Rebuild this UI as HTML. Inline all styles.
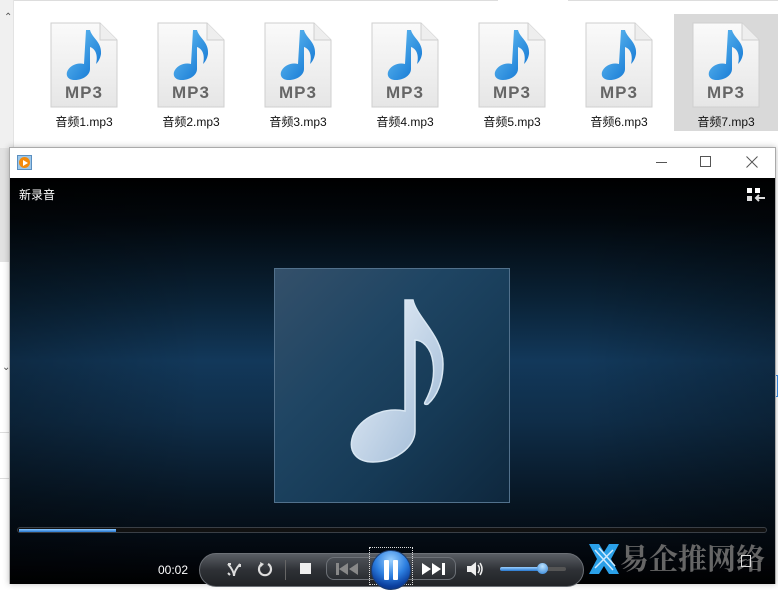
<!DOCTYPE html>
<html><head><meta charset="utf-8"><style>
*{margin:0;padding:0;box-sizing:border-box}
body{width:778px;height:584px;overflow:hidden;background:#fff;position:relative;font-family:"Liberation Sans","Noto Sans CJK SC",sans-serif}
.a{position:absolute}
.item{position:absolute;top:14px;width:104px;height:117px}
.item .lbl{position:absolute;top:99px;left:0;width:100%;text-align:center;font-size:12px;color:#111}
.file{position:absolute;left:18px;top:8px}
</style></head><body>
<div class="a" style="left:0;top:0;width:14px;height:262px;background:#f0f0f0;border-right:1px solid #e3e3e3"></div>
<div class="a" style="left:4px;top:12px;font-size:10px;color:#555">&#8963;</div>
<div class="a" style="left:14px;top:0;width:484px;height:1px;background:#ddd"></div>
<div class="a" style="left:568px;top:0;width:210px;height:1px;background:#ddd"></div>
<div class="item" style="left:674px;background:#d9d9d9"></div>

<svg width="0" height="0" style="position:absolute"><defs>
<linearGradient id="pg" x1="0" y1="0" x2="0" y2="1"><stop offset="0" stop-color="#fafafa"/><stop offset="1" stop-color="#e6e6e6"/></linearGradient>
<linearGradient id="ng" x1="0" y1="0" x2="1" y2="1"><stop offset="0" stop-color="#6cc4f5"/><stop offset="1" stop-color="#0a6fd0"/></linearGradient>
<symbol id="f" viewBox="0 0 68 86">
<path d="M1 1H50L67 18V85H1Z" fill="url(#pg)" stroke="#cfcfcf"/>
<path d="M50 1V18H67" fill="#eee" stroke="#cfcfcf"/>
<path d="M36 8h4c2 8 12 12 11 24c-1 6-4 9-5 10c2-8 0-15-6-17v22c0 6-7 11-15 11c-7 0-9-4-8-8c2-6 10-10 17-8z" fill="url(#ng)"/>
<text x="34" y="76" text-anchor="middle" font-family="Liberation Sans" font-weight="bold" font-size="17" fill="#666" letter-spacing="1">MP3</text>
</symbol></defs></svg>

<div class="item" style="left:32px"><svg class="file" width="68" height="86"><use href="#f"/></svg><div class="lbl">音频1.mp3</div></div>
<div class="item" style="left:139px"><svg class="file" width="68" height="86"><use href="#f"/></svg><div class="lbl">音频2.mp3</div></div>
<div class="item" style="left:246px"><svg class="file" width="68" height="86"><use href="#f"/></svg><div class="lbl">音频3.mp3</div></div>
<div class="item" style="left:353px"><svg class="file" width="68" height="86"><use href="#f"/></svg><div class="lbl">音频4.mp3</div></div>
<div class="item" style="left:460px"><svg class="file" width="68" height="86"><use href="#f"/></svg><div class="lbl">音频5.mp3</div></div>
<div class="item" style="left:567px"><svg class="file" width="68" height="86"><use href="#f"/></svg><div class="lbl">音频6.mp3</div></div>
<div class="item" style="left:674px"><svg class="file" width="68" height="86"><use href="#f"/></svg><div class="lbl">音频7.mp3</div></div>

<div class="a" style="left:0;top:148px;width:10px;height:114px;background:#e2e2e2"></div>
<div class="a" style="left:2px;top:362px;font-size:10px;color:#555">&#8964;</div>
<div class="a" style="left:0;top:432px;width:10px;height:1px;background:#ddd"></div>
<div class="a" style="left:0;top:478px;width:10px;height:1px;background:#ddd"></div>
<div class="a" style="left:775px;top:375px;width:3px;height:22px;border:1px solid #3a8ee6"></div>

<div class="a" style="left:9px;top:147px;width:767px;height:437px;border:1px solid #aaa;border-bottom:none;background:#fff;box-shadow:0 0 6px rgba(0,0,0,.25)"></div>
<div class="a" style="left:17px;top:155px;width:15px;height:15px;background:#9cc7ea;border:1px solid #5b8fc0"></div>
<div class="a" style="left:19px;top:157px;width:11px;height:11px;border-radius:50%;background:#f38a0c"></div>
<div class="a" style="left:23px;top:159.5px;width:0;height:0;border-left:5px solid #fff;border-top:3px solid transparent;border-bottom:3px solid transparent"></div>
<div class="a" style="left:656px;top:162px;width:11px;height:1px;background:#555"></div>
<div class="a" style="left:700px;top:156px;width:11px;height:11px;border:1px solid #555"></div>
<svg class="a" style="left:746px;top:156px" width="12" height="12"><path d="M0.5 0.5L11.5 11.5M11.5 0.5L0.5 11.5" stroke="#555"/></svg>

<div class="a" style="left:10px;top:178px;width:765px;height:406px;background:linear-gradient(180deg,#000 0%,#02070c 10%,#0a2236 30%,#12385a 45%,#0f2d48 60%,#071522 80%,#02050a 95%,#000 100%)"></div>
<div class="a" style="left:10px;top:178px;width:765px;height:406px;background:linear-gradient(90deg,rgba(0,0,0,.25),transparent 25%,transparent 75%,rgba(0,0,0,.25))"></div>
<div class="a" style="left:19px;top:186px;font-size:12px;color:#fff">新录音</div>
<div class="a" style="left:747px;top:188px;width:5px;height:5px;background:#fff"></div>
<div class="a" style="left:755px;top:188px;width:5px;height:5px;background:#fff"></div>
<div class="a" style="left:747px;top:196px;width:5px;height:5px;background:#ddd"></div>
<svg class="a" style="left:754px;top:194px" width="11" height="8"><path d="M11 4H3M5 1L2 4L5 7" stroke="#ddd" stroke-width="2" fill="none"/></svg>

<div class="a" style="left:274px;top:268px;width:236px;height:235px;border:1px solid #52718c;background:linear-gradient(135deg,#34506a 0%,#1f4563 35%,#163a56 65%,#0e273d 100%)"></div>
<svg class="a" style="left:274px;top:268px" width="236" height="235">
<defs><linearGradient id="wn" x1="0" y1="0" x2="1" y2="1"><stop offset="0" stop-color="#f0f6fc"/><stop offset="1" stop-color="#9ab6d4"/></linearGradient></defs>
<path d="M131 32h8c4 18 30 36 30 64c0 18-6 32-15 40c-3 1-4 0-3-2c7-13 10-25 8-40c-2-15-11-22-18-22v91c0 16-20 31-42 31c-16 0-24-10-21-23c4-18 28-33 53-28z" fill="url(#wn)" stroke="#d8e6f2" stroke-width="1.5"/>
</svg>

<div class="a" style="left:17px;top:527px;width:750px;height:6px;border-radius:3px;background:#111;border:1px solid #3a3f46"></div>
<div class="a" style="left:19px;top:528.5px;width:97px;height:3px;background:linear-gradient(#8cc8ff,#2878d0)"></div>

<div class="a" style="left:158px;top:563px;font-size:12px;color:#fff">00:02</div>
<div class="a" style="left:199px;top:553px;width:385px;height:34px;border-radius:17px;background:linear-gradient(#5a5e64,#2e3136 50%,#202226);border:1px solid #6c7076"></div>
<div class="a" style="left:326px;top:557px;width:130px;height:23px;border-radius:8px;background:linear-gradient(#4a4e54,#2a2d31);border:1px solid #6d7177"></div>
<div class="a" style="left:285px;top:560px;width:1px;height:20px;background:#666"></div>
<svg class="a" style="left:226px;top:561px" width="16" height="16"><path d="M2 3Q8 10 8 15M14 3Q8 10 8 15M2 3L5 3M14 3L14 6M4 14L2 12" stroke="#ddd" stroke-width="2" fill="none"/></svg>
<svg class="a" style="left:257px;top:561px" width="16" height="16"><path d="M5 3A6 6 0 1 0 11 3" stroke="#ddd" stroke-width="2.2" fill="none"/><path d="M3 1L7 3L4 6Z" fill="#ddd"/></svg>
<div class="a" style="left:300px;top:563px;width:11px;height:11px;background:#eee"></div>
<svg class="a" style="left:336px;top:563px" width="24" height="12"><rect x="0" y="0" width="3" height="12" fill="#888"/><path d="M12 0V12L3 6ZM22 0V12L13 6Z" fill="#888"/></svg>
<svg class="a" style="left:422px;top:563px" width="24" height="12"><path d="M0 0V12L9 6ZM10 0V12L19 6Z" fill="#fff"/><rect x="20" y="0" width="3" height="12" fill="#fff"/></svg>
<div class="a" style="left:369px;top:547px;width:44px;height:38px;border:1px dotted #ddd"></div>
<div class="a" style="left:371px;top:550px;width:40px;height:40px;border-radius:50%;background:radial-gradient(circle at 50% 25%,#9ad0ff 0%,#2d7fe0 45%,#0b3f9e 75%,#082a6a 100%);border:1px solid #1d3c6e"></div>
<div class="a" style="left:384px;top:560px;width:5px;height:20px;background:#fff;border-radius:1px"></div>
<div class="a" style="left:393px;top:560px;width:5px;height:20px;background:#fff;border-radius:1px"></div>
<svg class="a" style="left:467px;top:561px" width="18" height="16"><path d="M0 5H4L9 1V15L4 11H0Z" fill="#eee"/><path d="M11 4Q14 8 11 12M13 2Q17 8 13 14" stroke="#eee" stroke-width="1.5" fill="none"/></svg>
<div class="a" style="left:500px;top:567px;width:66px;height:4px;border-radius:2px;background:#555"></div>
<div class="a" style="left:500px;top:567px;width:42px;height:4px;border-radius:2px;background:linear-gradient(#9cd0ff,#2878d0)"></div>
<div class="a" style="left:537px;top:563px;width:11px;height:11px;border-radius:50%;background:radial-gradient(circle at 50% 30%,#bfe4ff,#2a7fd6)"></div>

<svg class="a" style="left:587px;top:540px" width="34" height="38"><path d="M2 4L12 4L17 12L22 4L32 4L24 19L32 34L22 34L17 26L12 34L2 34L10 19Z" fill="#2aa0e8"/><path d="M8 10L26 30M12 8L28 26M8 28L26 10" stroke="#cfeaff" stroke-width="1.5"/></svg>
<div class="a" style="left:620px;top:540px;font-size:29px;font-weight:bold;color:#666;font-family:'Noto Serif CJK SC','Noto Sans CJK SC',serif;letter-spacing:0;white-space:nowrap;line-height:36px">易企推网络</div>
<div class="a" style="left:741px;top:555px;width:10px;height:12px;border:1px solid #ddd"></div>
</body></html>
